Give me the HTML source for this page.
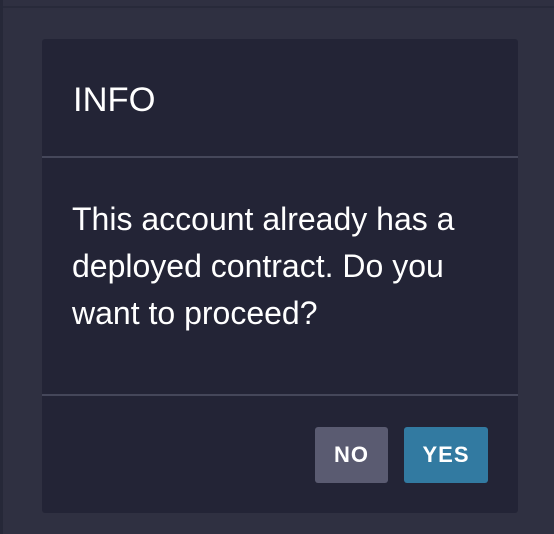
<!DOCTYPE html>
<html><head><style>
html,body{margin:0;padding:0;}
body{width:554px;height:534px;background:#2f3041;position:relative;overflow:hidden;font-family:"Liberation Sans",sans-serif;}
.ls{position:absolute;left:0;top:0;width:3px;height:534px;background:#262838;}
.tl{position:absolute;left:3px;top:6px;width:551px;height:2px;background:#282a3a;}
.m{position:absolute;left:42px;top:39px;width:476px;height:474px;background:#232436;border-radius:3px;}
.t{position:absolute;left:31px;top:41px;font-size:34.5px;color:#fff;line-height:40px;}
.h1{position:absolute;left:0;top:117px;width:476px;height:2px;background:#45475a;}
.b{position:absolute;left:30px;top:157px;font-size:32px;color:#fff;line-height:47px;white-space:nowrap;}
.h2{position:absolute;left:0;top:355px;width:476px;height:2px;background:#45475a;}
.btn{position:absolute;top:388px;height:56px;border-radius:3px;color:#fff;font-weight:bold;font-size:22px;letter-spacing:1px;text-align:center;line-height:56px;}
.no{left:273px;width:73px;background:#5a5b71;}
.yes{left:362px;width:84px;background:#327aa1;}
</style></head><body>
<div class="ls"></div><div class="tl"></div>
<div class="m">
<div class="t">INFO</div>
<div class="h1"></div>
<div class="b">This account already has a<br>deployed contract. Do you<br>want to proceed?</div>
<div class="h2"></div>
<div class="btn no">NO</div>
<div class="btn yes">YES</div>
</div>
</body></html>
